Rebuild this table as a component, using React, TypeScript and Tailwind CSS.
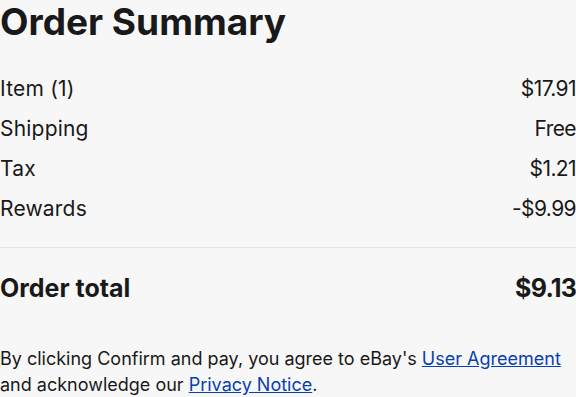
export default function App() {
  const rows = [
    { label: "Item (1)", value: "$17.91" },
    { label: "Shipping", value: "Free" },
    { label: "Tax", value: "$1.21" },
    { label: "Rewards", value: "-$9.99" },
  ];

  return (
    <div className="min-h-screen w-[576px] bg-[#f7f7f7] text-[#191919] font-['Inter',sans-serif]">
      <h2 className="text-[37px] leading-[44px] font-bold">Order Summary</h2>

      <div className="mt-[25px]">
        {rows.map((r) => (
          <div key={r.label} className="flex justify-between items-center h-[40px] text-[21px] tracking-[0.2px]">
            <span>{r.label}</span>
            <span className="tracking-[-0.6px]">{r.value}</span>
          </div>
        ))}
      </div>

      <div className="mt-[18px] border-t border-[#e5e5e5]" />

      <div className="mt-[21px] flex justify-between items-center h-[40px] text-[25px] font-bold">
        <span>Order total</span>
        <span className="tracking-[-0.8px]">$9.13</span>
      </div>

      <p className="mt-[37px] text-[18px] leading-[26px]">
        By clicking Confirm and pay, you agree to eBay's{" "}
        <a href="#" className="text-[#0840b0] underline">User Agreement</a>
        <br />
        and acknowledge our{" "}
        <a href="#" className="text-[#0840b0] underline">Privacy Notice</a>.
      </p>
    </div>
  );
}
